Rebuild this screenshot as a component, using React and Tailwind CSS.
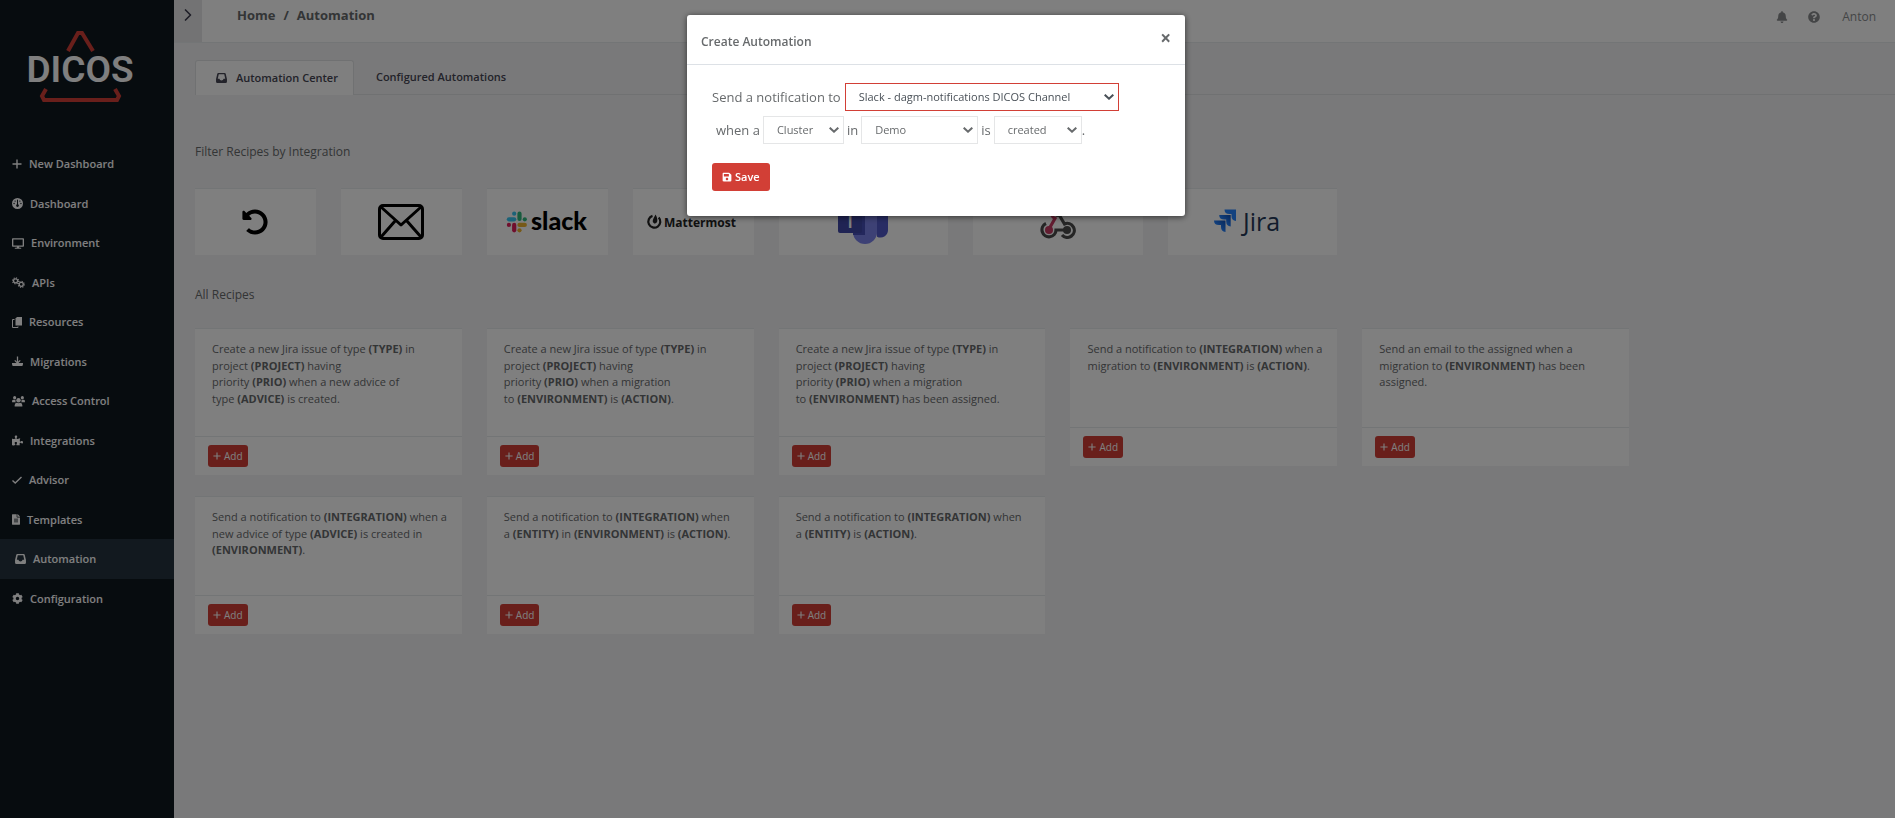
import { useState } from 'react';
import { ChevronRight } from 'lucide-react';
import {
  FaDesktop, FaPuzzlePiece, FaFileAlt, FaCog, FaBell, FaQuestionCircle, FaSave, FaUndoAlt
} from 'react-icons/fa';
import { FaGauge } from 'react-icons/fa6';

const PlusIcon = ({ className }) => (
  <svg viewBox="0 0 10 10" className={className} fill="none" stroke="currentColor" strokeWidth="1.4">
    <path d="M5 0.5v9M0.5 5h9" />
  </svg>
);

const CheckIcon = ({ className }) => (
  <svg viewBox="0 0 10 8" className={className} fill="none" stroke="currentColor" strokeWidth="1.4">
    <path d="M0.5 4.500l2.700 2.500 6.300-6" />
  </svg>
);

const GearsIcon = ({ className }) => (
  <svg viewBox="0 0 14 12" className={className} fill="none" stroke="currentColor">
    <circle cx="3.800" cy="4.200" r="2.200" strokeWidth="1.400" />
    <circle cx="3.800" cy="4.200" r="3.300" strokeWidth="1.200" strokeDasharray="1.300 1.290" />
    <circle cx="10" cy="8" r="2.200" strokeWidth="1.400" />
    <circle cx="10" cy="8" r="3.300" strokeWidth="1.200" strokeDasharray="1.300 1.290" />
  </svg>
);

const DocsIcon = ({ className }) => (
  <svg viewBox="0 0 10 11" className={className}>
    <path d="M2.500 2.500h-2v8h5.500V9.500" fill="none" stroke="currentColor" />
    <path d="M3.500 1.500L5 0h5v8.500H3.500z" fill="currentColor" />
  </svg>
);

const InboxIcon = ({ className }) => (
  <svg viewBox="0 0 12 11" className={className} fill="currentColor">
    <path fillRule="evenodd" d="M2.500 0h7q1 0 1.200 1L12 6.500V9.500q0 1.500-1.500 1.500h-9Q0 11 0 9.500v-3L1.300 1q.2-1 1.200-1zM3 1.500L1.900 6.200h1.800q.3 2 2.300 2t2.300-2h1.800L9 1.500z" />
  </svg>
);

const DownloadIcon = ({ className }) => (
  <svg viewBox="0 0 12 12" className={className} fill="none" stroke="currentColor">
    <path d="M6 0.500v7M3 4.800l3 3 3-3" strokeWidth="1.400" />
    <path d="M1 7.500v1h10v-1M0.500 10h11" strokeWidth="2" />
  </svg>
);

const UsersIcon = ({ className }) => (
  <svg viewBox="0 0 14 12" className={className} fill="currentColor">
    <circle cx="2.800" cy="1.800" r="1.700" />
    <circle cx="11.200" cy="1.800" r="1.700" />
    <circle cx="7" cy="4.600" r="2.400" />
    <path d="M0 6.800V5.500Q0 4 1.500 4h2.300q-.6 1.600.4 2.800zM14 6.800V5.500Q14 4 12.500 4h-2.300q.6 1.600-.4 2.800zM2.800 11.500V10q0-2.300 2.300-2.600 1.900 1 3.800 0 2.300.3 2.300 2.600v1.500z" />
  </svg>
);

const menu = [
  { label: 'New Dashboard', icon: PlusIcon, size: 'w-[10px] h-[10px]' },
  { label: 'Dashboard', icon: FaGauge, size: 'w-[11px] h-[11px]' },
  { label: 'Environment', icon: FaDesktop, size: 'w-[12px] h-[11px]' },
  { label: 'APIs', icon: GearsIcon, size: 'w-[13px] h-[11px]' },
  { label: 'Resources', icon: DocsIcon, size: 'w-[10px] h-[11px]' },
  { label: 'Migrations', icon: DownloadIcon, size: 'w-[11px] h-[11px]' },
  { label: 'Access Control', icon: UsersIcon, size: 'w-[13px] h-[11px]' },
  { label: 'Integrations', icon: FaPuzzlePiece, size: 'w-[11px] h-[11px]' },
  { label: 'Advisor', icon: CheckIcon, size: 'w-[10px] h-[8px]' },
  { label: 'Templates', icon: FaFileAlt, size: 'w-[8px] h-[11px]' },
  { label: 'Automation', icon: InboxIcon, size: 'w-[11px] h-[10px]', active: true },
  { label: 'Configuration', icon: FaCog, size: 'w-[11px] h-[11px]' },
];

// Placeholders in (CAPS) are printed bold, line breaks are kept
const recipes = [
  'Create a new Jira issue of type (TYPE) in\nproject (PROJECT) having\npriority (PRIO) when a new advice of\ntype (ADVICE) is created.',
  'Create a new Jira issue of type (TYPE) in\nproject (PROJECT) having\npriority (PRIO) when a migration\nto (ENVIRONMENT) is (ACTION).',
  'Create a new Jira issue of type (TYPE) in\nproject (PROJECT) having\npriority (PRIO) when a migration\nto (ENVIRONMENT) has been assigned.',
  'Send a notification to (INTEGRATION) when a migration to (ENVIRONMENT) is (ACTION).',
  'Send an email to the assigned when a migration to (ENVIRONMENT) has been assigned.',
  'Send a notification to (INTEGRATION) when a new advice of type (ADVICE) is created in (ENVIRONMENT).',
  'Send a notification to (INTEGRATION) when\na (ENTITY) in (ENVIRONMENT) is (ACTION).',
  'Send a notification to (INTEGRATION) when\na (ENTITY) is (ACTION).',
];

function Logo() {
  return (
    <svg viewBox="0 0 106 72" className="w-[106px] h-[72px] overflow-visible" role="img" aria-label="DICOS">
      <path d="M41 20L51 2h4l11 18" fill="none" stroke="#d23f36" strokeWidth="4" />
      <text x="53" y="51" textAnchor="middle" fontFamily="Roboto, sans-serif" fontWeight="600" fontSize="37" fill="#fff">DICOS</text>
      <path d="M19 58l-4 7 2 4h73l2-4-4-7" fill="none" stroke="#d23f36" strokeWidth="4" />
    </svg>
  );
}

function Sidebar() {
  return (
    <aside className="w-[174px] shrink-0 bg-[#0f181f] pb-10">
      <a href="#home" className="block pt-[31px] pl-[27px] mb-[41px]"><Logo /></a>
      <nav>
        {menu.map(({ label, icon: Icon, size, active }) => (
          <a
            key={label}
            href="#menu"
            className={`flex items-center gap-[7px] pt-3 pb-[11px] text-[11px] leading-normal font-semibold text-white ${active ? 'bg-[#25323e] pl-[15px]' : 'pl-3'}`}
          >
            <Icon className={`${size} shrink-0`} />
            {label}
          </a>
        ))}
      </nav>
    </aside>
  );
}

function Header() {
  return (
    <header className="flex h-[43px] bg-white border-b border-[#e7eaec]">
      <button type="button" aria-label="Expand menu" className="w-7 pb-3 flex items-center justify-center bg-[#e7e7e8] text-[#3b3b4f]">
        <ChevronRight size={20} strokeWidth={2} />
      </button>
      <nav className="flex gap-2 pl-[35px] pt-[5px] text-[13px] leading-5 font-bold text-[#676a6c]">
        <a href="#home">Home</a>
        <span>/</span>
        <a href="#automation">Automation</a>
      </nav>
      <div className="ml-auto flex items-center pr-[19px] pb-2 text-[#888b8d] text-[12px]">
        <button type="button" aria-label="Notifications"><FaBell size={12} /></button>
        <button type="button" aria-label="Help" className="ml-5"><FaQuestionCircle size={12} /></button>
        <a href="#profile" className="ml-[22px] leading-5 font-medium">Anton</a>
      </div>
    </header>
  );
}

function Tabs() {
  return (
    <div className="flex border-b border-[#e1e3e5] text-[11px] leading-4 font-semibold text-[#464654]">
      <button type="button" className="flex items-center gap-[9px] h-[35px] pr-[15px] pl-5 -mb-px rounded-t-[3px] border border-b-0 border-[#e1e3e5] bg-white">
        <InboxIcon className="w-[11px] h-[10px]" />
        Automation Center
      </button>
      <button type="button" className="px-[22px]">Configured Automations</button>
    </div>
  );
}

function EnvelopeIcon() {
  return (
    <svg viewBox="0 0 46 36" className="w-[46px] h-9" fill="none" stroke="#000" strokeWidth="3" strokeLinejoin="round">
      <rect x="1.500" y="1.500" width="43" height="33" rx="3.500" />
      <path d="M3 3l20 18L43 3M3 33l14.500-16.500M43 33L28.500 16.500" />
    </svg>
  );
}

function SlackLogo() {
  return (
    <svg viewBox="0 0 82 24" className="w-[82px] h-6 overflow-visible" role="img" aria-label="Slack">
      <g strokeWidth="4.200" strokeLinecap="round">
        <path d="M8.200 9.300H2.900" stroke="#36c5f0" />
        <path d="M8.200 3.700v0" stroke="#36c5f0" />
        <path d="M13.500 9V3.700" stroke="#2eb67d" />
        <path d="M18.800 9.300v0" stroke="#2eb67d" />
        <path d="M13.500 14.900h5.300" stroke="#ecb22e" />
        <path d="M13.500 20.300v0" stroke="#ecb22e" />
        <path d="M8.200 14.900v5.400" stroke="#e01e5a" />
        <path d="M2.900 14.900v0" stroke="#e01e5a" />
      </g>
      <text x="25" y="20" fontFamily="Lato, sans-serif" fontWeight="900" fontSize="25" fill="#000">slack</text>
    </svg>
  );
}

function MattermostLogo() {
  return (
    <svg viewBox="0 0 94 18" className="w-[94px] h-[18px] overflow-visible" role="img" aria-label="Mattermost">
      <path d="M6.500 2.900A6 6 0 1 0 12.700 4.500" fill="none" stroke="#222" strokeWidth="2.200" />
      <path d="M9.600 1.600q2.300 4.400 1.600 7-.8 2.400-3 1.900-2.100-.8-1.400-3.200.6-2 2.800-5.700z" fill="#222" />
      <text x="18" y="14" fontFamily="'Open Sans', sans-serif" fontWeight="700" fontSize="12" fill="#222">Mattermost</text>
    </svg>
  );
}

function TeamsLogo() {
  return (
    <svg viewBox="0 0 50 46" className="w-[50px] h-[46px]" role="img" aria-label="Teams">
      <circle cx="42" cy="10" r="5" fill="#5059c9" />
      <circle cx="27" cy="7" r="7" fill="#7b83eb" />
      <path d="M35 16h15v15a7.500 7.500 0 0 1-11 6.700z" fill="#5059c9" />
      <path d="M15 16h24v17a12 12 0 0 1-24 0z" fill="#7b83eb" />
      <path d="M15 16h12v20H15z" fill="#464eb8" />
      <rect y="11" width="24" height="23" rx="2" fill="#4048a8" />
      <text x="12" y="29" textAnchor="middle" fontFamily="'Open Sans', sans-serif" fontWeight="600" fontSize="19" fill="#fff">T</text>
    </svg>
  );
}

function WebhookIcon() {
  return (
    <svg viewBox="0 0 36 34" className="w-9 h-[34px]" fill="none" strokeWidth="3.200">
      <path d="M9 24l6-10.500A7 7 0 1 1 25 8.500" stroke="#c73a63" />
      <path d="M18 8l6.500 11a7 7 0 1 1-2.500 11" stroke="#4b4b4b" />
      <path d="M27 25H16A7 7 0 1 1 6 18.500" stroke="#4b4b4b" />
      <circle cx="9" cy="25" r="4" fill="#c73a63" />
      <circle cx="18" cy="8" r="4" fill="#4b4b4b" />
      <circle cx="27" cy="25" r="4" fill="#4b4b4b" />
    </svg>
  );
}

function JiraLogo() {
  return (
    <svg viewBox="0 0 68 26" className="w-[68px] h-[26px] mr-3 overflow-visible" role="img" aria-label="Jira">
      <defs>
        <linearGradient id="jira" x1="1" y1="0" x2="0.400" y2="0.600">
          <stop offset="0" stopColor="#0f4fb5" />
          <stop offset="1" stopColor="#2684ff" />
        </linearGradient>
      </defs>
      <path d="M11.500 0.500H23v11.500q-4.500-.5-4.500-5V5h-2q-5 0-5-4.500z" fill="#2684ff" />
      <path d="M6.200 6H17.700v11.500q-4.500-.5-4.500-5v-2h-2q-5 0-5-4.500z" fill="url(#jira)" />
      <path d="M1 11.500h11.500V23q-4.500-.5-4.500-5v-2H6q-5 0-5-4.500z" fill="url(#jira)" />
      <text x="30" y="22" fontFamily="'Open Sans', sans-serif" fontWeight="500" fontSize="25" fill="#253858">Jira</text>
    </svg>
  );
}

function FilterTile({ label, children }) {
  return (
    <button type="button" aria-label={label} className="flex items-center justify-center h-[67px] bg-white border-t border-[#e7eaec]">
      {children}
    </button>
  );
}

function RecipeCard({ text }) {
  return (
    <article className="bg-white border-t border-[#e7eaec] text-[#676a6c]">
      <p className="min-h-[98px] pl-[17px] pr-2 pt-3 pb-[29px] text-[11px] leading-normal whitespace-pre-line">
        {text.split(/(\([A-Z]+\))/).map((part, i) => (i % 2 ? <b key={i}>{part}</b> : part))}
      </p>
      <div className="px-[13px] py-2 border-t border-[#e7eaec]">
        <button type="button" className="flex items-center gap-[3px] h-[22px] px-[5px] rounded-[3px] bg-[#d23f36] text-white text-[10px] leading-4">
          <PlusIcon className="w-2 h-2" />
          Add
        </button>
      </div>
    </article>
  );
}

function Select({ label, value, options, className }) {
  const [selected, setSelected] = useState(value);
  return (
    <span className={`relative ${className}`}>
      <select
        aria-label={label}
        value={selected}
        onChange={(e) => setSelected(e.target.value)}
        className="block w-full h-7 pl-[13px] pr-5 border border-inherit bg-white text-[11px] appearance-none"
      >
        {options.map((option) => <option key={option}>{option}</option>)}
      </select>
      <svg viewBox="0 0 10 6" className="absolute right-[5px] top-[11px] w-[10px] h-[6px] pointer-events-none" fill="none" stroke="currentColor" strokeWidth="2">
        <path d="M0.700 0.700L5 4.700l4.300-4" />
      </svg>
    </span>
  );
}

function CreateAutomationModal() {
  return (
    <div className="fixed inset-0 bg-black/50 flex items-start justify-center pt-[15px] pr-[23px]">
      <div role="dialog" aria-labelledby="modal-title" className="w-[498px] rounded-[3px] bg-white shadow-[0_1px_6px_rgba(0,0,0,0.6)] text-[#676a6c]">
        <div className="flex items-start justify-between h-[50px] px-[14px] border-b border-[#dde1e6]">
          <h2 id="modal-title" className="pt-[18px] text-[12px] leading-[18px] font-semibold">Create Automation</h2>
          <button type="button" aria-label="Close" className="pt-[14px] text-[19px] leading-[18px] font-bold">×</button>
        </div>
        <form className="px-[25px] pt-[18px] pb-[25px] text-[13px] leading-5" onSubmit={(e) => e.preventDefault()}>
          <div className="flex items-center gap-1">
            Send a notification to
            <Select label="Channel" value="Slack - dagm-notifications DICOS Channel" options={['Slack - dagm-notifications DICOS Channel']} className="w-[274px] border-[#d23f36] text-[#495057]" />
          </div>
          <div className="flex items-center gap-[3px] mt-[5px] pl-1">
            when a
            <Select label="Entity" value="Cluster" options={['Cluster', 'API']} className="w-[81px] border-[#e5e6e7]" />
            in
            <Select label="Environment" value="Demo" options={['Demo']} className="w-[117px] border-[#e5e6e7]" />
            is
            <Select label="Action" value="created" options={['created', 'deleted']} className="w-[88px] border-[#e5e6e7]" />
            <span className="-ml-[3px]">.</span>
          </div>
          <button type="submit" className="flex items-center gap-[3px] h-7 px-[10px] mt-[19px] rounded-[3px] bg-[#d23f36] text-white text-[11px] font-semibold">
            <FaSave size={10} />
            Save
          </button>
        </form>
      </div>
    </div>
  );
}

export default function App() {
  return (
    <div className="flex min-h-screen bg-[#f3f3f4] font-['Open_Sans',sans-serif]">
      <Sidebar />
      <div className="flex-1 min-w-0">
        <Header />
        <div className="pl-[21px] pt-[17px]"><Tabs /></div>
        <main className="w-5/6 ml-[21px] text-[#676a6c]">
          <h2 className="mt-[47px] text-[12px] leading-5 font-medium">Filter Recipes by Integration</h2>
          <div className="grid grid-cols-5 gap-x-[25px] mt-[26px]">
            <div className="col-span-2 grid grid-cols-4 gap-x-[25px]">
              <FilterTile label="Reset filter"><FaUndoAlt size={26} color="#000" /></FilterTile>
              <FilterTile label="Email"><EnvelopeIcon /></FilterTile>
              <FilterTile label="Slack"><SlackLogo /></FilterTile>
              <FilterTile label="Mattermost"><MattermostLogo /></FilterTile>
            </div>
            <div className="col-span-2 grid grid-cols-3 gap-x-[25px]">
              <FilterTile label="Teams"><TeamsLogo /></FilterTile>
              <FilterTile label="Webhook"><WebhookIcon /></FilterTile>
              <FilterTile label="Jira"><JiraLogo /></FilterTile>
            </div>
          </div>
          <h2 className="mt-[30px] text-[12px] leading-5 font-medium">All Recipes</h2>
          <div className="grid grid-cols-5 items-start gap-x-[25px] gap-y-[21px] mt-[23px] pb-10">
            {recipes.map((text) => <RecipeCard key={text} text={text} />)}
          </div>
        </main>
      </div>
      <CreateAutomationModal />
    </div>
  );
}
